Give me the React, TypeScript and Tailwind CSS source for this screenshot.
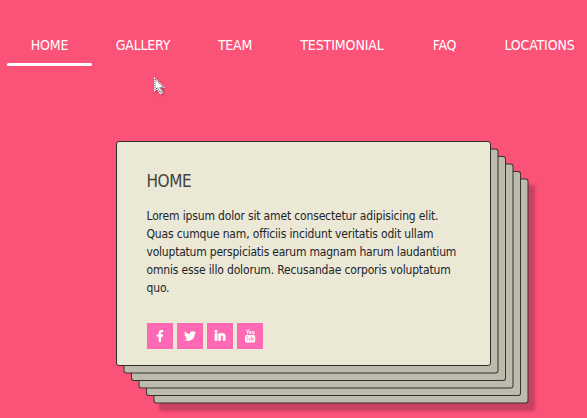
import { FaFacebookF, FaTwitter, FaLinkedinIn } from 'react-icons/fa';

const links = [
  { label: 'HOME', width: 'w-[85px]', tracking: 'tracking-[-0.15px]' },
  { label: 'GALLERY', width: 'w-[102px]', tracking: 'tracking-[-0.2px]' },
  { label: 'TEAM', width: 'w-[82px]', tracking: 'tracking-[-0.25px]' },
  { label: 'TESTIMONIAL', width: 'w-[132px]', tracking: 'tracking-[-0.1px]' },
  { label: 'FAQ', width: 'w-[73px]', tracking: 'tracking-[-0.25px]' },
  { label: 'LOCATIONS', width: 'w-[117px]', tracking: 'tracking-[-0.15px]' },
];

function YoutubeIcon() {
  return (
    <svg width="12" height="14" viewBox="0 0 12 14" fill="none" stroke="white" strokeWidth=".9">
      <path d="M2.2.5 3.6 3 5 .5M3.6 3v2.3" />
      <rect x="5.2" y="2.3" width="1.5" height="2.5" rx=".7" />
      <path d="M8.3 2v2.4q.8.9 1.6 0V2M9.9 4v1.2" />
      <rect x="1" y="6" width="10.2" height="7.5" rx="1.6" fill="white" stroke="none" />
      <path d="M2 7.6h2.4M3.2 7.6v4.3M5 8.8v2.5h1.2V8.8M7.4 7.2v4.3h1V9h-1M10.3 10.2h-.9V9h.9M9.4 11.5h.9" stroke="#ff69b4" strokeWidth=".5" />
    </svg>
  );
}

function Cursor() {
  return (
    <svg className="absolute left-[153px] top-[76px] drop-shadow-[1px_1px_1px_rgba(0,0,0,0.3)]" width="14" height="20" viewBox="0 0 14 20">
      <path d="M1 1v15l3.2-2.8 2.9 5.3 3.2-1.7-2.4-4.7h4.3z" fill="white" />
      <path d="M2 3.2 10.5 11.6H7.2M2 3.2v10.6l2.6-2.2 3 5.4 1.6-.9-2.4-4.5" fill="none" stroke="#222" strokeWidth=".9" strokeDasharray="1.1 .9" />
    </svg>
  );
}

const social = 'flex h-[26px] w-[26px] items-center justify-center bg-[#ff69b4] text-white';

export default function App() {
  return (
    <main className="relative h-[418px] w-[587px] overflow-hidden bg-[#fb5277] font-['DejaVu_Sans_Condensed','DejaVu_Sans',sans-serif] [font-stretch:condensed]">
      <nav className="flex h-[66px] pl-[7px] pt-6">
        {links.map(({ label, width, tracking }, i) => (
          <a
            key={label}
            className={`flex h-[42px] shrink-0 justify-center text-[14px] leading-[42px] text-white ${width} ${tracking}`}
          >
            <span className="relative flex w-full justify-center whitespace-nowrap">
              {label}
              {i === 0 && <span className="absolute inset-x-0 bottom-0 h-[3px] rounded-full bg-white" />}
            </span>
          </a>
        ))}
      </nav>
      <Cursor />
      <article className="ml-[116px] mt-[75px] h-[225px] w-[375px] rounded-[3px] border border-[#2d2d2d] bg-[#ebe8d6] pl-[29.5px] pt-[29px] shadow-[7.5px_7.5px_0_-1px_#bdbbab,7.5px_7.5px_0_0_#333,15px_15px_0_-1px_#bdbbab,15px_15px_0_0_#333,22.5px_22.5px_0_-1px_#bdbbab,22.5px_22.5px_0_0_#333,30px_30px_0_-1px_#bdbbab,30px_30px_0_0_#333,37.5px_37.5px_0_-1px_#bdbbab,37.5px_37.5px_0_0_#333,43.5px_44.5px_3px_0_#c84160]">
        <h2 className="h-5 text-[17px] leading-5 tracking-[-0.45px] text-[#44433f]">HOME</h2>
        <p className="mt-4 whitespace-nowrap text-[12px] leading-[18px] text-[#212529]">
          <span className="block tracking-[-0.16px]">Lorem ipsum dolor sit amet consectetur adipisicing elit.</span>
          <span className="block tracking-[-0.16px]">Quas cumque nam, officiis incidunt veritatis odit ullam</span>
          <span className="block tracking-[-0.21px]">voluptatum perspiciatis earum magnam harum laudantium</span>
          <span className="block tracking-[-0.16px]">omnis esse illo dolorum. Recusandae corporis voluptatum</span>
          <span className="block tracking-[-0.16px]">quo.</span>
        </p>
        <div className="mt-[26px] flex gap-1 pl-[0.5px]">
          <a className={social}><FaFacebookF size={12} /></a>
          <a className={social}><FaTwitter size={12} /></a>
          <a className={social}><FaLinkedinIn size={12} strokeWidth={25} /></a>
          <a className={social}><YoutubeIcon /></a>
        </div>
      </article>
    </main>
  );
}
